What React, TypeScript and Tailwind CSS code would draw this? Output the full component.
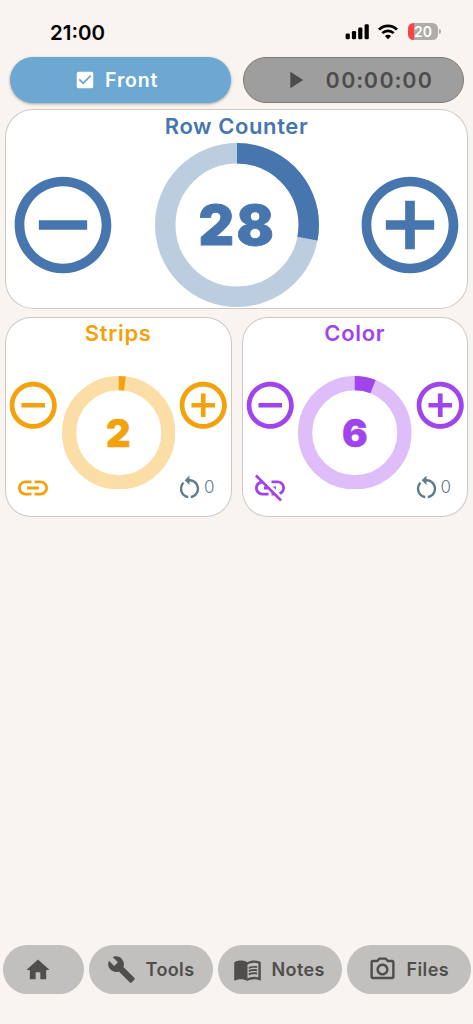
import { useEffect, useState } from 'react';
import {
  MdAddCircleOutline,
  MdBuild,
  MdCheckBox,
  MdCheckBoxOutlineBlank,
  MdHome,
  MdLink,
  MdLinkOff,
  MdMenuBook,
  MdOutlinePhotoCamera,
  MdPause,
  MdPlayArrow,
  MdRemoveCircleOutline,
  MdRestartAlt,
} from 'react-icons/md';

const MAX_COUNT = 100;

interface DialProps {
  value: number;
  size: number;
  stroke: number;
  trackClass: string;
}

// Progress ring that starts at 12 o'clock and runs clockwise
const Dial = ({ value, size, stroke, trackClass }: DialProps) => {
  const center = size / 2;
  const radius = (size - stroke) / 2;
  const length = 2 * Math.PI * radius;

  return (
    <svg width={size} height={size} viewBox={`0 0 ${size} ${size}`} fill="none" className="col-start-1 row-start-1">
      <circle cx={center} cy={center} r={radius} strokeWidth={stroke} className={trackClass} />
      <circle
        cx={center}
        cy={center}
        r={radius}
        stroke="currentColor"
        strokeWidth={stroke}
        strokeDasharray={`${(length * value) / MAX_COUNT} ${length}`}
        transform={`rotate(-90 ${center} ${center})`}
      />
    </svg>
  );
};

const StatusBar = () => (
  <header className="flex h-[57px] items-start justify-between pl-[50px] pr-[32px] pt-[18px] text-black">
    <span className="pt-[1px] text-[20.5px] font-semibold leading-[27px]">21:00</span>
    <div className="flex h-[27px] items-center">
      <svg width="24" height="16" viewBox="0 0 24 16" fill="currentColor">
        <rect x="0.6" y="9.6" width="4.2" height="5.6" rx="1.3" />
        <rect x="6.9" y="7" width="4.2" height="8.2" rx="1.3" />
        <rect x="13.2" y="3.6" width="4.2" height="11.6" rx="1.3" />
        <rect x="19.6" y="0.2" width="4.2" height="15" rx="1.3" />
      </svg>
      <svg width="20" height="16" viewBox="0 0 20 16" fill="none" stroke="currentColor" strokeWidth="2.7" className="ml-[9px]">
        <path d="M1 5.6C6 0.6 14 0.6 19 5.6" />
        <path d="M4.3 9.1C7.5 6 12.5 6 15.7 9.1" />
        <path d="M10 15.2 6.9 12.1C8.6 10.4 11.4 10.4 13.1 12.1Z" fill="currentColor" stroke="none" />
      </svg>
      <div className="ml-[10px] flex h-[17px] w-[30px] items-center justify-center rounded-[5.5px] bg-linear-to-r from-[#fa4248] from-20% to-[#b0aca9] to-20% text-[14px] font-semibold leading-none text-white">
        20
      </div>
      <span className="ml-[1px] h-[5px] w-[2px] rounded-r-full bg-[#b0aca9]" />
    </div>
  </header>
);

interface SmallCounterProps {
  title: string;
  value: number;
  onChange: (value: number) => void;
  colorClass: string;
  trackClass: string;
}

const SmallCounter = ({ title, value, onChange, colorClass, trackClass }: SmallCounterProps) => {
  const [linked, setLinked] = useState(title === 'Strips');
  const [resets, setResets] = useState(0);

  const handleReset = () => {
    onChange(0);
    setResets(resets + 1);
  };

  return (
    <section className={`h-[200px] w-[226.5px] rounded-[26px] bg-white ring-1 ring-inset ring-[#cbc9c8] ${colorClass}`}>
      <h2 className="pt-[2.5px] text-center text-[22px] font-semibold leading-[28px] tracking-[0.7px]">{title}</h2>
      <div className="mt-[28.5px] flex">
        <div className="flex w-[56.5px] flex-col items-center">
          <button aria-label="Decrease" className="mt-[1.5px]" onClick={() => onChange(Math.max(0, value - 1))}>
            <MdRemoveCircleOutline size={56.5} />
          </button>
          <button aria-label="Toggle link" className="mt-[36px]" onClick={() => setLinked(!linked)}>
            {linked ? <MdLink size={36} /> : <MdLinkOff size={36} />}
          </button>
        </div>
        <div className="grid h-[113.5px] place-items-center">
          <Dial value={value} size={113.5} stroke={14.2} trackClass={trackClass} />
          <span className="col-start-1 row-start-1 text-[38px] font-black leading-none [-webkit-text-stroke:0.4px_currentColor]">{value}</span>
        </div>
        <div className="flex w-[56.5px] flex-col items-center">
          <button aria-label="Increase" className="mt-[1.5px]" onClick={() => onChange(Math.min(MAX_COUNT, value + 1))}>
            <MdAddCircleOutline size={56.5} />
          </button>
          <button
            aria-label="Reset"
            className="mt-[39.5px] flex items-center self-start text-[#607d8b]"
            onClick={handleReset}
          >
            <MdRestartAlt size={29} />
            <span className="text-[17px] font-light leading-none">{resets}</span>
          </button>
        </div>
      </div>
    </section>
  );
};

const formatTime = (total: number) =>
  [Math.floor(total / 3600), Math.floor(total / 60) % 60, total % 60]
    .map(part => String(part).padStart(2, '0'))
    .join(':');

export default function App() {
  const [rows, setRows] = useState(28);
  const [strips, setStrips] = useState(2);
  const [color, setColor] = useState(6);
  const [isFront, setIsFront] = useState(true);
  const [running, setRunning] = useState(false);
  const [seconds, setSeconds] = useState(0);

  useEffect(() => {
    if (!running) return;
    const timer = setInterval(() => setSeconds(prev => prev + 1), 1000);
    return () => clearInterval(timer);
  }, [running]);

  return (
    <div className="flex h-[1024px] w-[473px] flex-col overflow-hidden bg-[#f9f4f0] font-['Inter',sans-serif]">
      <StatusBar />

      <div className="flex gap-[12px] pl-[9.6px]">
        <button
          className="flex h-[46px] w-[221px] items-center rounded-full bg-[#6ca8d1] pl-[64px] text-[19.5px] font-semibold tracking-[0.8px] text-white shadow-[0_1px_3px_rgba(0,0,0,0.35)]"
          onClick={() => setIsFront(!isFront)}
        >
          {isFront ? <MdCheckBox size={22} /> : <MdCheckBoxOutlineBlank size={22} />}
          <span className="ml-[9.5px] pt-[1px]">{isFront ? 'Front' : 'Back'}</span>
        </button>
        <button
          className="flex h-[46px] w-[221px] items-center rounded-full border border-[#7b7a79] bg-[#9e9e9e] pl-[37px] text-[#4c4c4c]"
          onClick={() => setRunning(!running)}
        >
          {running ? <MdPause size={28} /> : <MdPlayArrow size={28} />}
          <span className="ml-[17px] text-[22px] font-semibold tabular-nums tracking-[1.3px]">{formatTime(seconds)}</span>
        </button>
      </div>

      <section className="ml-[5px] mt-[6.4px] h-[200px] w-[463px] rounded-[28px] bg-white text-[#4775ad] ring-1 ring-inset ring-[#cbc9c8]">
        <h1 className="pt-[3px] text-center text-[22px] font-semibold leading-[28px] tracking-[0.6px]">Row Counter</h1>
        <div className="mt-[3px] flex h-[164px] items-center justify-between">
          <button aria-label="Decrease rows" onClick={() => setRows(Math.max(0, rows - 1))}>
            <MdRemoveCircleOutline size={116} />
          </button>
          <div className="grid place-items-center">
            <Dial value={rows} size={164} stroke={20.5} trackClass="stroke-[#bccde0]" />
            <span className="col-start-1 row-start-1 pl-[2px] pt-[1px] text-[55px] font-black leading-none tracking-[2.5px] [-webkit-text-stroke:0.8px_currentColor]">
              {rows}
            </span>
          </div>
          <button aria-label="Increase rows" onClick={() => setRows(Math.min(MAX_COUNT, rows + 1))}>
            <MdAddCircleOutline size={116} />
          </button>
        </div>
      </section>

      <div className="mt-[7.6px] flex gap-[10px] pl-[5px]">
        <SmallCounter title="Strips" value={strips} onChange={setStrips} colorClass="text-[#f2a20c]" trackClass="stroke-[#fbdda6]" />
        <SmallCounter title="Color" value={color} onChange={setColor} colorClass="text-[#a045ec]" trackClass="stroke-[#dfbdf9]" />
      </div>

      <nav className="mt-auto flex gap-[5px] pb-[30px] pl-[2.5px] text-[18px] font-semibold tracking-[0.4px] text-[#4f4e4c]">
        <button aria-label="Home" className="flex h-[49px] w-[81px] items-center rounded-full bg-[#c1c0be] pl-[21.5px]">
          <MdHome size={28} />
        </button>
        <button className="flex h-[49px] w-[124px] items-center rounded-full bg-[#c1c0be] pl-[18.5px]">
          <MdBuild size={29} />
          <span className="ml-[9.5px]">Tools</span>
        </button>
        <button className="flex h-[49px] w-[124px] items-center rounded-full bg-[#c1c0be] pl-[15px]">
          <MdMenuBook size={29} />
          <span className="ml-[10px]">Notes</span>
        </button>
        <button className="flex h-[49px] w-[124px] items-center rounded-full bg-[#c1c0be] pl-[21.5px]">
          <MdOutlinePhotoCamera size={29} />
          <span className="ml-[9.5px]">Files</span>
        </button>
      </nav>
    </div>
  );
}
